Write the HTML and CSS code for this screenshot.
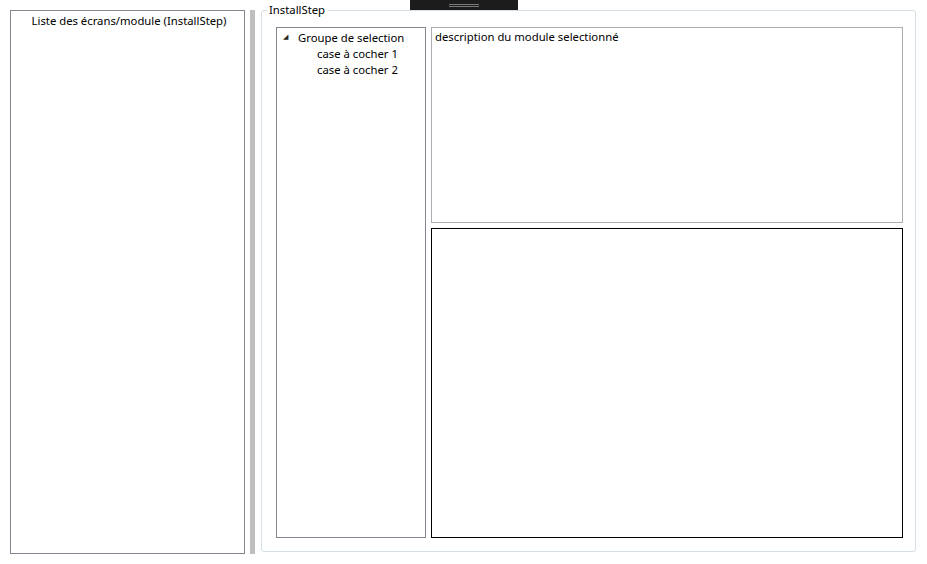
FILE: index.html
```html
<!DOCTYPE html>
<html lang="fr">
<head>
<meta charset="utf-8">
<title>InstallStep</title>
<link rel="stylesheet" href="styles.css">
</head>
<body>
<div class="window">
  <div class="module-list">
    <div class="module-list-title">Liste des écrans/module (InstallStep)</div>
  </div>
  <div class="splitter"></div>
  <div class="groupbox">
    <span class="groupbox-header">InstallStep</span>
    <div class="groupbox-content">
      <div class="tree">
        <div class="tree-item">
          <span class="tree-toggle">◢</span><span>Groupe de selection</span>
        </div>
        <div class="tree-children">
          <div class="tree-leaf">case à cocher 1</div>
          <div class="tree-leaf">case à cocher 2</div>
        </div>
      </div>
      <div class="detail">
        <div class="description">description du module selectionné</div>
        <div class="preview"></div>
      </div>
    </div>
  </div>
</div>
<div class="drag-handle"><span class="grip"></span></div>
</body>
</html>
```
FILE: styles.css
```css
html, body {
  margin: 0;
  padding: 0;
  background: #ffffff;
}
body {
  font-family: "Segoe UI", "Noto Sans", "Open Sans", sans-serif;
  font-size: 11.3px;
  color: #000000;
  width: 927px;
  height: 564px;
  overflow: hidden;
  position: relative;
}
.window {
  display: flex;
  align-items: flex-start;
  padding: 10px 0 0 10px;
  height: 554px;
  box-sizing: border-box;
}
.module-list {
  width: 235px;
  height: 544px;
  border: 1px solid #828790;
  box-sizing: border-box;
  text-align: center;
}
.module-list-title {
  line-height: 16px;
  padding-top: 2px;
  padding-left: 3px;
}
.splitter {
  width: 5px;
  height: 544px;
  background: #bfbfbf;
  margin-left: 5px;
}
.groupbox {
  position: relative;
  margin-left: 6px;
  width: 655px;
  height: 542px;
  border: 1px solid #d5dfe5;
  border-radius: 3px;
  box-sizing: border-box;
}
.groupbox-header {
  position: absolute;
  top: -9px;
  left: 5px;
  padding: 0 3px 0 2px;
  background: #ffffff;
  line-height: 16px;
}
.groupbox-content {
  display: flex;
  gap: 5px;
  padding: 16px 12px 13px 14px;
  height: 100%;
  box-sizing: border-box;
}
.tree {
  width: 150px;
  flex: none;
  border: 1px solid #828790;
  box-sizing: border-box;
  padding-top: 2px;
}
.tree-item {
  display: flex;
  align-items: center;
  line-height: 16px;
  padding-left: 6px;
}
.tree-toggle {
  font-size: 7px;
  color: #262626;
  width: 15px;
  margin-top: -2px;
}
.tree-children {
  padding-left: 40px;
}
.tree-leaf {
  line-height: 16px;
}
.detail {
  flex: 1;
  display: flex;
  flex-direction: column;
  gap: 5px;
}
.description {
  height: 196px;
  border: 1px solid #abadb3;
  box-sizing: border-box;
  padding: 1px 3px;
  line-height: 16px;
}
.preview {
  flex: 1;
  border: 1px solid #000000;
}
.drag-handle {
  position: absolute;
  left: 410px;
  top: 0;
  width: 108px;
  height: 10px;
  background: #1c1c1c;
  display: flex;
  justify-content: center;
  padding-top: 4px;
  box-sizing: border-box;
}
.grip {
  display: block;
  width: 30px;
  height: 3px;
  border-top: 1px solid #7a7a7a;
  border-bottom: 1px solid #7a7a7a;
  box-sizing: border-box;
}
```
